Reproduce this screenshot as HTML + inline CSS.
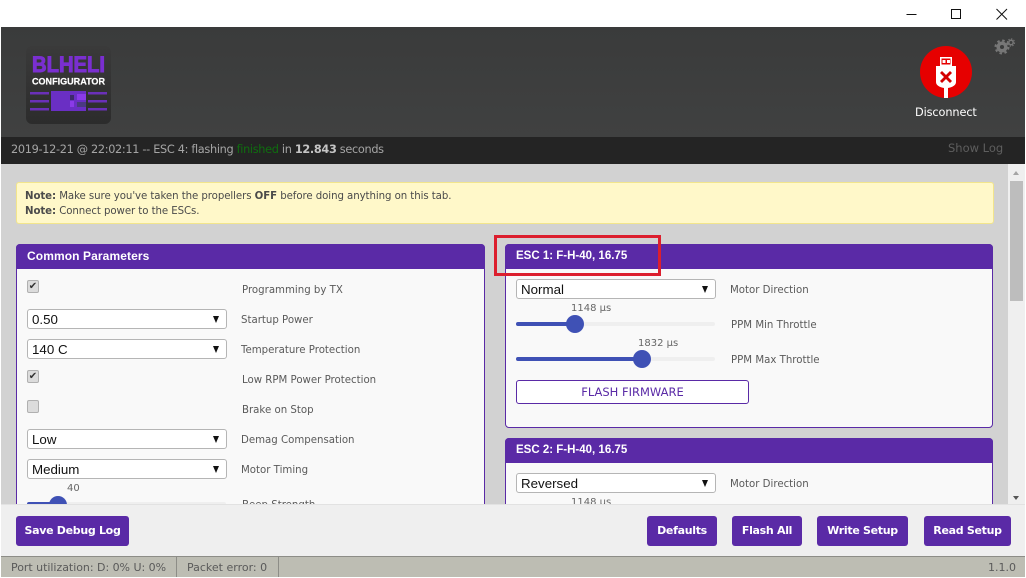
<!DOCTYPE html>
<html><head><meta charset="utf-8"><style>
html,body{margin:0;padding:0;width:1026px;height:578px;overflow:hidden;background:#fff}
div{position:absolute;box-sizing:border-box;white-space:nowrap}
body{font-family:"DejaVu Sans","Liberation Sans",sans-serif;font-size:10.2px;color:#555}
.l{color:#5a5a5a;line-height:14px;margin-top:1px}
.sel{background:#fff;border:1px solid #b5b5b5;border-radius:3px;height:20px;font-family:"Liberation Sans",sans-serif;font-size:13.33px;color:#111;line-height:19px;padding-left:4px}
.sel i{position:absolute;right:7px;top:6px;width:0;height:0;border-left:3.5px solid transparent;border-right:3.5px solid transparent;border-top:7px solid #111}
.hd{background:#5a2aa6;color:#fff;font-family:"Liberation Sans",sans-serif;font-weight:bold;font-size:11.5px;line-height:25px;height:25px;border-radius:4px 4px 0 0;padding-left:11px}
.panel{background:#f9f9f9;border:1px solid #5a2aa6;border-radius:4px}
.cb{width:12px;height:13px;background:#dcdcdc;border:1px solid #b0b0b0;border-radius:2px;color:#333;font-size:10px;line-height:11px;text-align:center}
.tr{height:4px;background:#efefef;border-radius:2px}
.fl{height:4px;background:#3f51b5;border-radius:2px}
.th{width:18px;height:18px;background:#3f51b5;border-radius:50%}
.v{color:#666;font-size:10px;line-height:12px}
.btn{background:#5a2aa6;color:#fff;font-weight:bold;font-size:11px;letter-spacing:-.3px;height:30px;line-height:29px;text-align:center;border-radius:3px;top:516px}
</style></head><body>
<svg style="position:absolute;left:900px;top:0" width="126" height="27" fill="none" stroke="#111" stroke-width="1"><path d="M6.500 14.500h10"/><rect x="51.500" y="9.500" width="9" height="9"/><path d="M96.500 9l10.500 10.500M107 9l-10.500 10.500"/></svg>

<div style="left:1px;top:27px;width:1024px;height:110px;background:linear-gradient(#3a3b3b,#404141)"></div>
<svg style="position:absolute;left:26px;top:46px" width="86" height="79">
<defs><linearGradient id="g" x1="0" y1="0" x2="0" y2="1"><stop offset="0" stop-color="#3a3a3a"/><stop offset="1" stop-color="#2c2c2c"/></linearGradient></defs>
<rect x="0" y="0" width="85" height="78" rx="6" fill="url(#g)"/>
<text x="42.500" y="26" text-anchor="middle" font-family="Liberation Sans" font-weight="bold" font-size="22" fill="#7a2fd0" stroke="#7a2fd0" stroke-width="1" textLength="73" lengthAdjust="spacingAndGlyphs">BLHELI</text>
<text x="42.500" y="38.500" text-anchor="middle" font-family="Liberation Sans" font-weight="bold" font-size="9" fill="#fff" stroke="#fff" stroke-width=".2" textLength="73" lengthAdjust="spacingAndGlyphs">CONFIGURATOR</text>
<rect x="25" y="45" width="35" height="20" fill="#6a2fc4"/>
<rect x="44" y="49" width="4" height="5" fill="#3c2a6a"/><rect x="44" y="55" width="4" height="6" fill="#8a3ae8"/>
<rect x="51" y="48" width="9" height="6" fill="#8a3ae8"/><rect x="51" y="56" width="9" height="5" fill="#4a3a80"/>
<g fill="#6a30b8"><rect x="4" y="46" width="19" height="2.500"/><rect x="4" y="54" width="19" height="2.500"/><rect x="4" y="62" width="19" height="2.500"/><rect x="62" y="46" width="19" height="2.500"/><rect x="62" y="54" width="19" height="2.500"/><rect x="62" y="62" width="19" height="2.500"/></g>
</svg>
<div style="left:920px;top:46px;width:52px;height:52px;background:#e60000;border-radius:50%"></div>
<svg style="position:absolute;left:925px;top:45px" width="42" height="54" fill="#fff">
<path d="M15 12h12v9h-12zM16.500 13.500v6h9v-6z" fill-rule="evenodd"/><rect x="17.500" y="15" width="3" height="3"/><rect x="22" y="15" width="3" height="3"/>
<path d="M11 21h20v16c0 3-3 5-8 6v10h-4V43c-5-1-8-3-8-6z"/>
<path d="M17 26l4 4 4-4 2 2-4 4 4 4-2 2-4-4-4 4-2-2 4-4-4-4z" fill="#d40000"/>
</svg>
<div style="left:915px;top:105px;font-size:11.300px;color:#fff;line-height:15px;letter-spacing:-.1px">Disconnect</div>
<svg style="position:absolute;left:994px;top:38px" width="22" height="18" fill="none" stroke="#777">
<circle cx="8" cy="9" r="3.800" stroke-width="3.500"/><circle cx="8" cy="9" r="6.500" stroke-width="2" stroke-dasharray="2.500 2.600"/>
<circle cx="17" cy="4.500" r="2.200" stroke-width="1.500"/><circle cx="17" cy="4.500" r="3.600" stroke-width="1" stroke-dasharray="1.500 1.300"/>
</svg>

<div style="left:1px;top:137px;width:1024px;height:27px;background:#242424"></div>
<div style="left:11px;top:142px;font-size:11.300px;line-height:16px;color:#a5a5a5;letter-spacing:-.32px">2019-12-21 @ 22:02:11 -- ESC 4: flashing <font color="#0f6e0f">finished</font> in <b style="color:#c4c4c4">12.843</b> seconds</div>
<div style="left:948px;top:141px;font-size:11.500px;line-height:15px;color:#5e5e5e">Show Log</div>

<div style="left:1px;top:164px;width:1007px;height:340px;background:#d2d2d2"></div>
<div style="left:1008px;top:164px;width:17px;height:340px;background:#efefef"></div>
<div style="left:1010px;top:181px;width:13px;height:120px;background:#bdbdbd"></div>
<div style="left:1013px;top:171px;width:0;height:0;border-left:3.500px solid transparent;border-right:3.500px solid transparent;border-bottom:4px solid #a5a5a5"></div>
<div style="left:1013px;top:496px;width:0;height:0;border-left:3.500px solid transparent;border-right:3.500px solid transparent;border-top:4px solid #555"></div>

<div style="left:16px;top:182px;width:978px;height:42px;background:#fff8c9;border:1px solid #f2e58c;border-radius:3px"></div>
<div class="l" style="left:25px;top:189px;color:#4a4a4a;letter-spacing:-.07px"><b>Note:</b> Make sure you've taken the propellers <b>OFF</b> before doing anything on this tab.</div>
<div class="l" style="left:25px;top:204px;color:#4a4a4a;letter-spacing:-.07px"><b>Note:</b> Connect power to the ESCs.</div>

<div class="panel" style="left:16px;top:244px;width:469px;height:280px"></div>
<div class="hd" style="left:16px;top:244px;width:469px;font-size:12px;letter-spacing:.1px">Common Parameters</div>
<div class="cb" style="left:27px;top:280px">✔</div>
<div class="l" style="left:242px;top:283px">Programming by TX</div>
<div class="sel" style="left:27px;top:309px;width:200px">0.50<i></i></div>
<div class="l" style="left:241px;top:313px">Startup Power</div>
<div class="sel" style="left:27px;top:339px;width:200px">140 C<i></i></div>
<div class="l" style="left:241px;top:343px">Temperature Protection</div>
<div class="cb" style="left:27px;top:370px">✔</div>
<div class="l" style="left:242px;top:373px">Low RPM Power Protection</div>
<div class="cb" style="left:27px;top:400px"></div>
<div class="l" style="left:242px;top:403px">Brake on Stop</div>
<div class="sel" style="left:27px;top:429px;width:200px">Low<i></i></div>
<div class="l" style="left:241px;top:433px">Demag Compensation</div>
<div class="sel" style="left:27px;top:459px;width:200px">Medium<i></i></div>
<div class="l" style="left:241px;top:463px">Motor Timing</div>
<div class="v" style="left:67px;top:483px">40</div>
<div class="tr" style="left:27px;top:502px;width:199px"></div><div class="fl" style="left:27px;top:502px;width:30px"></div>
<div class="th" style="left:49px;top:496px"></div>
<div class="l" style="left:242px;top:498px">Beep Strength</div>

<div class="panel" style="left:505px;top:244px;width:488px;height:184px"></div>
<div class="hd" style="left:505px;top:244px;width:488px">ESC 1: F-H-40, 16.75</div>
<div class="sel" style="left:516px;top:279px;width:200px">Normal<i></i></div>
<div class="l" style="left:730px;top:283px">Motor Direction</div>
<div class="v" style="left:571px;top:303px">1148 µs</div>
<div class="tr" style="left:516px;top:322px;width:199px"></div><div class="fl" style="left:516px;top:322px;width:58px"></div>
<div class="th" style="left:566px;top:315px"></div>
<div class="l" style="left:731px;top:318px">PPM Min Throttle</div>
<div class="v" style="left:638px;top:338px">1832 µs</div>
<div class="tr" style="left:516px;top:357px;width:199px"></div><div class="fl" style="left:516px;top:357px;width:125px"></div>
<div class="th" style="left:633px;top:350px"></div>
<div class="l" style="left:731px;top:353px">PPM Max Throttle</div>
<div style="left:516px;top:380px;width:233px;height:24px;background:#fff;border:1px solid #5a2aa6;border-radius:3px;color:#5a2aa6;font-size:11.500px;line-height:22px;text-align:center">FLASH FIRMWARE</div>

<div class="panel" style="left:505px;top:438px;width:488px;height:90px"></div>
<div class="hd" style="left:505px;top:438px;width:488px">ESC 2: F-H-40, 16.75</div>
<div class="sel" style="left:516px;top:473px;width:200px">Reversed<i></i></div>
<div class="l" style="left:730px;top:477px">Motor Direction</div>
<div class="v" style="left:571px;top:497px">1148 µs</div>

<div style="left:494px;top:235px;width:167px;height:41px;border:3px solid #dc1f2e"></div>

<div style="left:1px;top:504px;width:1024px;height:52px;background:#efefef;border-top:1px solid #e2e2e2"></div>
<div class="btn" style="left:16px;width:113px">Save Debug Log</div>
<div class="btn" style="left:647px;width:70px">Defaults</div>
<div class="btn" style="left:732px;width:70px">Flash All</div>
<div class="btn" style="left:817px;width:91px">Write Setup</div>
<div class="btn" style="left:924px;width:87px">Read Setup</div>

<div style="left:1px;top:556px;width:1024px;height:21px;background:#bdbdb3;border-top:1px solid #8d8d87"></div>
<div style="left:176px;top:557px;width:1px;height:20px;background:#8d8d87"></div>
<div style="left:278px;top:557px;width:1px;height:20px;background:#8d8d87"></div>
<div class="l" style="left:11px;top:560px;font-size:11px;letter-spacing:-.03px">Port utilization: D: 0% U: 0%</div>
<div class="l" style="left:187px;top:560px;font-size:11px">Packet error: 0</div>
<div class="l" style="left:988px;top:560px;font-size:11px">1.1.0</div>
</body></html>
